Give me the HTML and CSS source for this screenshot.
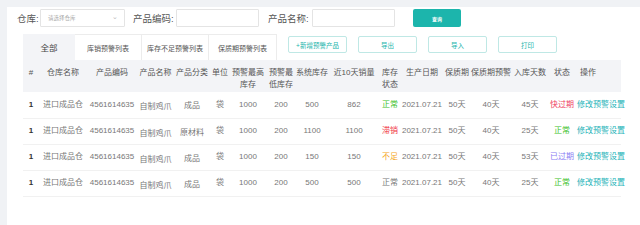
FILE: index.html
```html
<!DOCTYPE html>
<html lang="zh">
<head>
<meta charset="utf-8">
<link rel="stylesheet" href="styles.css">
</head>
<body>
<div class="panel">
  <div class="filters">
    <span class="label l-wh">仓库:</span>
    <div class="select"><span class="ph">请选择仓库</span><span class="arrow">⌄</span></div>
    <span class="label l-code">产品编码:</span>
    <div class="input"></div>
    <span class="label l-name">产品名称:</span>
    <div class="input"></div>
    <button class="btn-primary">查询</button>
  </div>
  <div class="section">
    <div class="toolbar">
      <div class="tabs">
        <div class="tab active">全部</div>
        <div class="tab">库销预警列表</div>
        <div class="tab">库存不足预警列表</div>
        <div class="tab">保质期预警列表</div>
      </div>
      <div class="actions">
        <button class="btn-outline">+新增预警产品</button>
        <button class="btn-outline">导出</button>
        <button class="btn-outline">导入</button>
        <button class="btn-outline">打印</button>
      </div>
    </div>
    <table class="grid">
      <colgroup>
        <col style="width:16px"><col style="width:48px"><col style="width:50px"><col style="width:37px">
        <col style="width:36px"><col style="width:20px"><col style="width:36px"><col style="width:30px">
        <col style="width:32px"><col style="width:52px"><col style="width:20px"><col style="width:44px">
        <col style="width:26px"><col style="width:42px"><col style="width:36px"><col style="width:28px">
        <col style="width:45px">
      </colgroup>
      <thead>
        <tr>
          <th>#</th><th>仓库名称</th><th>产品编码</th><th>产品名称</th><th>产品分类</th><th>单位</th>
          <th>预警最高<br>库存</th><th>预警最<br>低库存</th><th>系统库存</th><th>近10天销量</th>
          <th>库存<br>状态</th><th>生产日期</th><th>保质期</th><th>保质期预警</th><th>入库天数</th><th>状态</th><th class="op">操作</th>
        </tr>
      </thead>
      <tbody>
        <tr>
          <td class="idx">1</td><td>进口成品仓</td><td>4561614635</td><td class="low">自制鸡爪</td><td class="low1">成品</td><td>袋</td>
          <td>1000</td><td>200</td><td>500</td><td>862</td><td class="green">正常</td><td>2021.07.21</td>
          <td>50天</td><td>40天</td><td>45天</td><td class="red">快过期</td><td class="op link">修改预警设置</td>
        </tr>
        <tr>
          <td class="idx">1</td><td>进口成品仓</td><td>4561614635</td><td class="low">自制鸡爪</td><td class="low1">原材料</td><td>袋</td>
          <td>1000</td><td>200</td><td>1100</td><td>1100</td><td class="red2">滞销</td><td>2021.07.21</td>
          <td>50天</td><td>40天</td><td>25天</td><td class="green">正常</td><td class="op link">修改预警设置</td>
        </tr>
        <tr>
          <td class="idx">1</td><td>进口成品仓</td><td>4561614635</td><td class="low">自制鸡爪</td><td class="low1">成品</td><td>袋</td>
          <td>1000</td><td>200</td><td>150</td><td>150</td><td class="orange">不足</td><td>2021.07.21</td>
          <td>50天</td><td>40天</td><td>53天</td><td class="purple">已过期</td><td class="op link">修改预警设置</td>
        </tr>
        <tr>
          <td class="idx">1</td><td>进口成品仓</td><td>4561614635</td><td class="low">自制鸡爪</td><td class="low1">成品</td><td>袋</td>
          <td>1000</td><td>200</td><td>500</td><td>500</td><td>正常</td><td>2021.07.21</td>
          <td>50天</td><td>40天</td><td>25天</td><td class="green">正常</td><td class="op link">修改预警设置</td>
        </tr>
      </tbody>
    </table>
  </div>
</div>
</body>
</html>
```

FILE: styles.css
```css
* { box-sizing: border-box; }
html, body { margin: 0; padding: 0; }
body {
  background: #f0f2f5;
  padding: 7px 0 0 7px;
  font-family: "Liberation Sans", "Noto Sans CJK SC", sans-serif;
  color: #666;
  height: 225px;
  overflow: hidden;
}
.panel {
  background: #fff;
  height: 218px;
  padding: 2px 0 0 10px;
}
.filters {
  display: flex;
  align-items: center;
  height: 18px;
}
.label {
  font-size: 9.5px;
  color: #555;
  white-space: nowrap;
}
.l-wh { width: 23px; }
.l-code { margin-left: 8px; width: 43px; }
.l-name { margin-left: 9px; width: 44px; }
.select, .input {
  height: 18px;
  border: 1px solid #e4e4e4;
  border-radius: 1px;
  background: #fff;
}
.select {
  width: 85px;
  display: flex;
  align-items: center;
  justify-content: space-between;
  padding: 0 6px 0 7px;
}
.ph { font-size: 5.5px; color: #aaa; }
.arrow { font-size: 7px; color: #bbb; line-height: 1; margin-top: -3px; }
.input { width: 83px; }
.btn-primary {
  margin-left: 18px;
  width: 48px;
  height: 18px;
  border: none;
  border-radius: 2px;
  background: #1cb5ac;
  color: #fff;
  font-size: 5px;
  font-weight: bold;
  font-family: inherit;
  padding: 0;
}
.section {
  margin: 7px 0 0 6px;
}
.toolbar {
  display: flex;
  align-items: flex-start;
  height: 26px;
}
.tabs {
  display: flex;
  height: 26px;
}
.tab {
  width: 67px;
  height: 26px;
  display: flex;
  align-items: center;
  justify-content: center;
  font-size: 7px;
  color: #555;
  background: #fff;
  border: 1px solid #ececec;
  border-left: none;
  border-bottom: none;
}
.tab:last-child { width: 68px; }
.tab.active {
  width: 52px;
  background: #f3f4f7;
  border: none;
  font-size: 8.5px;
  color: #444;
}
.actions {
  display: flex;
  gap: 11px;
  margin: 2px 0 0 11px;
}
.btn-outline {
  width: 59px;
  height: 17px;
  padding: 0;
  border: 1px solid #bfe8e5;
  border-radius: 2px;
  background: #fff;
  color: #1cb5ac;
  font-size: 6.5px;
  font-family: inherit;
}
.grid {
  border-collapse: collapse;
  table-layout: fixed;
  width: 598px;
  font-size: 8px;
  line-height: 12px;
}
.grid th {
  background: #f3f4f7;
  font-weight: normal;
  color: #555;
  height: 32px;
  padding: 7px 0 0;
  vertical-align: top;
  white-space: nowrap;
  text-align: center;
}
.grid td {
  height: 26px;
  padding: 0;
  text-align: center;
  white-space: nowrap;
  color: #777;
  border-bottom: 1px solid #f1f1f1;
  overflow: visible;
}
.grid .op { text-align: left; padding-left: 4px; }
.grid td.op { padding-left: 1px; }
.grid td.idx { color: #333; font-weight: bold; }
.grid td.low { padding-top: 5px; }
.grid td.low1 { padding-top: 3px; }
.grid td.green { color: #3cbf2a; }
.grid td.red { color: #ee3f62; }
.grid td.red2 { color: #f0303a; }
.grid td.orange { color: #f5a623; }
.grid td.purple { color: #8a7cf3; }
.grid td.link { color: #1db3b8; }
```
